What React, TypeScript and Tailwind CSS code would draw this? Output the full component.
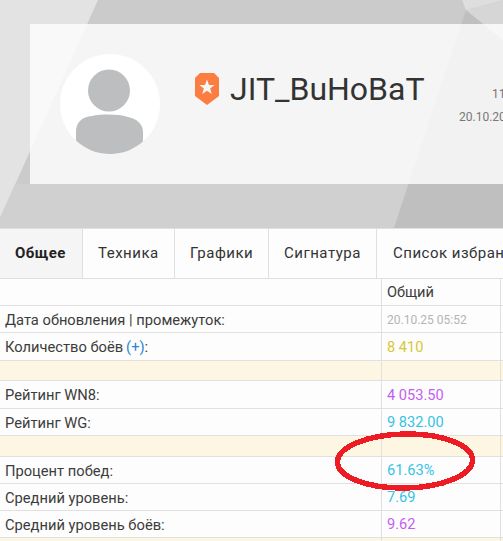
import React from 'react';

const tabs = [
  { label: 'Общее', w: 'w-[83px]', active: true },
  { label: 'Техника', w: 'w-[92px]' },
  { label: 'Графики', w: 'w-[94px]' },
  { label: 'Сигнатура', w: 'w-[108px]' },
  { label: 'Список избранного', w: 'w-[180px] pl-[16px]' },
];

const Row = ({ label, value, color, h }: { label: React.ReactNode; value: string; color?: string; h: string }) => (
  <div className={`grid grid-cols-[381px_119px_60px] ${h} border-b border-[#e0e0e0] bg-[#fdfdfd]`}>
    <div className="flex items-center pl-[5px] pt-[2px] text-[14.7px] text-[#3c3c3c]">{label}</div>
    <div className={`flex items-center pl-[5px] pt-[2px] border-l border-[#e0e0e0] ${color ?? ''}`}>{value}</div>
    <div className="border-l border-[#e0e0e0]" />
  </div>
);

const Spacer = ({ h }: { h: string }) => (
  <div className={`grid grid-cols-[381px_119px_60px] ${h} border-b border-[#e0e0e0] bg-[#fdf6e3]`}>
    <div />
    <div className="border-l border-[#e0e0e0]" />
    <div className="border-l border-[#e0e0e0]" />
  </div>
);

export default function App() {
  return (
    <div className="relative w-[503px] h-[541px] overflow-hidden bg-white font-['Roboto',sans-serif] text-[14.6px]">
      <div className="relative h-[228px] bg-[#cbcbcb] pt-[24px] pl-[30px]">
        <svg className="absolute inset-0" width="503" height="228">
          <polygon points="0,0 98,0 0,218" fill="#e3e3e3" />
          <polygon points="0,218 15,184 408,184 394,228 0,228" fill="#d0d0d0" />
          <polygon points="394,228 466,10 503,40 503,228" fill="#bfbfbf" />
          <polygon points="466,10 503,0 503,40" fill="#d6d6d6" />
          <polygon points="462,0 503,0 466,10" fill="#dedede" />
        </svg>
        <div className="relative flex h-[160px] w-[520px] bg-white/80">
          <div className="ml-[30px] mt-[30px] relative h-[100px] w-[100px] overflow-hidden rounded-full bg-white">
            <svg width="100" height="100" viewBox="0 0 100 100">
              <circle cx="49" cy="36.5" r="21" fill="#bdbec0" />
              <path d="M16 100 V 78 C16 68 22 63 32 62 C 42 60 58 60 68 63 C 78 65 83 71 83 78 V 100 Z" fill="#bdbec0" />
            </svg>
          </div>
          <div className="ml-[35px] mt-[49px] flex h-[32px] items-start">
            <svg width="24" height="32" viewBox="0 0 24 32">
              <path d="M5 0 H19 L24 5 V23 L12 32 L0 23 V5 Z" fill="#fb7d41" />
              <path d="M12 6.5 L14 12 L19.6 12 L15.2 15.4 L16.8 21 L12 17.7 L7.2 21 L8.8 15.4 L4.4 12 L10 12 Z" fill="#f5f5f5" />
            </svg>
            <span className="ml-[11px] text-[32px] leading-[32px] text-[#333333]">JIT_BuHoBaT</span>
          </div>
          <div className="absolute left-[429px] top-[59px] text-[12px] leading-[23px] text-[#777777] whitespace-nowrap">
            <div className="pl-[33px]">11 000</div>
            <div>20.10.2025</div>
          </div>
        </div>
      </div>
      <div className="flex h-[51px] border-y border-[#e0e0e0] bg-[#fdfdfd] text-[#333333] text-[15px] tracking-[0.5px]">
        {tabs.map((t) => (
          <div
            key={t.label}
            className={`${t.w} shrink-0 flex items-center pl-[15px] border-r border-[#e0e0e0] whitespace-nowrap ${t.active ? 'bg-[#f5f5f5] font-bold text-[#222222]' : ''}`}
          >
            {t.label}
          </div>
        ))}
      </div>
      <Row h="h-[27px]" label="" value="Общий" color="text-[#3c3c3c]" />
      <Row h="h-[27px]" label="Дата обновления | промежуток:" value="20.10.25 05:52" color="text-[#b4b4b4] text-[12px]" />
      <Row
        h="h-[28px]"
        label={
          <>
            Количество боёв <span className="ml-[3px] text-[#2a86d0]">(+)</span>:
          </>
        }
        value="8 410"
        color="text-[#d8c737]"
      />
      <Spacer h="h-[20px]" />
      <Row h="h-[28px]" label="Рейтинг WN8:" value="4 053.50" color="text-[#c65cf5]" />
      <Row h="h-[27px]" label="Рейтинг WG:" value="9 832.00" color="text-[#36c3e8]" />
      <Spacer h="h-[21px]" />
      <Row h="h-[27px]" label="Процент побед:" value="61.63%" color="text-[#36c3e8]" />
      <Row h="h-[27px]" label="Средний уровень:" value="7.69" color="text-[#36c3e8]" />
      <Row h="h-[27px]" label="Средний уровень боёв:" value="9.62" color="text-[#c65cf5]" />
      <Spacer h="h-[20px]" />
      <svg className="absolute left-[330px] top-[428px]" width="150" height="66" viewBox="0 0 150 66" shapeRendering="crispEdges">
        <ellipse cx="75" cy="33" rx="67.5" ry="27" fill="none" stroke="#ed1c24" strokeWidth="5.5" transform="rotate(-1 75 33)" />
      </svg>
    </div>
  );
}
